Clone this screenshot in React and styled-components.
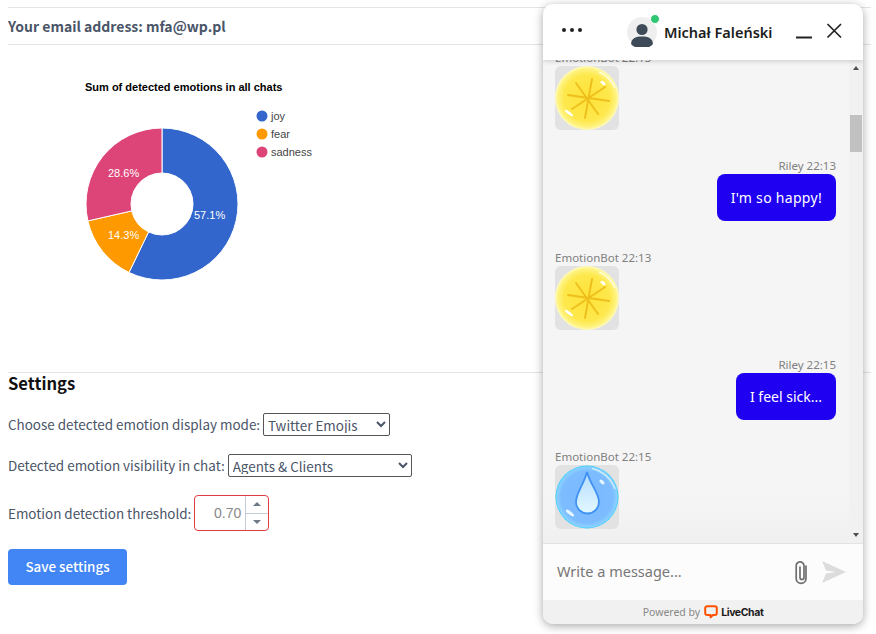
import React from "react";
import styled, { createGlobalStyle } from "styled-components";

const Global = createGlobalStyle`
  html, body { margin: 0; padding: 0; background: #fff; }
  body { font-family: "Noto Sans CJK SC", "Noto Sans", sans-serif; color: #4a5568; overflow: hidden; }
`;

const Page = styled.main`
  width: 863px;
  height: 627px;
  padding: 7px 0 0 8px;
`;
const EmailRow = styled.div`
  height: 36px;
  border-top: 1px solid #e2e4e8;
  border-bottom: 1px solid #e2e4e8;
  display: flex;
  align-items: center;
  font-size: 14px;
  font-weight: 700;
  color: #4a5568;
`;
const ChartBox = styled.div`
  height: 327px;
  svg { display: block; }
`;
const Settings = styled.section`
  border-top: 1px solid #e2e4e8;
`;
const Heading = styled.h2`
  margin: -1px 0 0;
  font-size: 16.6px;
  line-height: 22px;
  font-weight: 700;
  color: #111;
`;
const Field = styled.div`
  display: flex;
  align-items: center;
  gap: 3px;
  font-size: 13.45px;
  line-height: 23px;
  height: ${p => p.$h || 23}px;
  margin-top: ${p => p.$top}px;
  white-space: nowrap;
`;
const Select = styled.select`
  width: ${p => p.$w}px;
  height: 23px;
  box-sizing: border-box;
  border: 1px solid #555;
  border-radius: 2px;
  background: #fff;
  color: #4a5568;
  font-family: inherit;
  font-size: 13.45px;
  line-height: 18px;
  padding: 0 0 2px;
`;
const Stepper = styled.div`
  width: 75px;
  height: 36px;
  box-sizing: border-box;
  border: 1px solid #e03c41;
  border-radius: 4px;
  display: flex;
  overflow: hidden;
`;
const StepValue = styled.div`
  flex: 1;
  display: flex;
  align-items: center;
  justify-content: flex-end;
  padding-right: 4px;
  font-family: "Liberation Sans", sans-serif;
  font-size: 14px;
  color: #888;
`;
const StepButtons = styled.div`
  width: 22px;
  border-left: 1px solid #c5ccd6;
  display: flex;
  flex-direction: column;
`;
const StepButton = styled.div`
  flex: 1;
  display: flex;
  align-items: center;
  justify-content: center;
  & + & { border-top: 1px solid #c5ccd6; }
  &::after {
    content: "";
    border-left: 4px solid transparent;
    border-right: 4px solid transparent;
    ${p => p.$up ? "border-bottom: 4px solid #6f7a87;" : "border-top: 4px solid #6f7a87;"}
  }
`;
const SaveButton = styled.button`
  display: block;
  width: 119px;
  height: 36px;
  margin-top: 18px;
  border: 0;
  border-radius: 4px;
  background: #4285f4;
  color: #fff;
  font-family: inherit;
  font-size: 13.4px;
  font-weight: 500;
  line-height: 20px;
  padding: 0 0 2px;
`;

/* chat widget — floats over the page */
const Chat = styled.aside`
  position: absolute;
  left: 543px;
  top: 4px;
  width: 320px;
  height: 620px;
  border-radius: 10px;
  overflow: hidden;
  background: #fff;
  box-shadow: 0 2px 10px rgba(0,0,0,.35);
  display: flex;
  flex-direction: column;
  font-family: "Noto Sans", sans-serif;
`;
const ChatHeader = styled.header`
  flex: 0 0 56px;
  position: relative;
  z-index: 2;
  background: #fff;
  box-shadow: 0 1px 5px rgba(0,0,0,.18);
  display: flex;
  align-items: center;
  padding: 0 21px 0 19px;
  svg { display: block; }
`;
const Dots = styled.div`
  display: flex;
  gap: 4px;
  margin-top: -4px;
  i { width: 4px; height: 4px; border-radius: 50%; background: #222; display: block; }
`;
const AvatarWrap = styled.div`
  position: relative;
  margin-left: 45px;
  width: 30px;
  height: 30px;
`;
const OnlineDot = styled.span`
  position: absolute;
  right: -3px;
  top: -3px;
  width: 8px;
  height: 8px;
  border-radius: 50%;
  background: #2fc774;
  border: 1px solid #fff;
`;
const AgentName = styled.div`
  margin-left: 7px;
  width: 133px;
  font-size: 14.5px;
  font-weight: 600;
  color: #1b1d20;
  white-space: nowrap;
`;
const Controls = styled.div`
  display: flex;
  align-items: center;
  gap: 14px;
  margin-top: -3px;
`;
const ChatBody = styled.div`
  flex: 0 0 483px;
  display: flex;
  background: linear-gradient(#f5f5f5 90%, #f0f0f0);
  border-bottom: 1px solid #e3e3e3;
  overflow: hidden;
`;
const Messages = styled.div`
  flex: 1;
  padding: 0 13px 0 12px;
  margin-top: -10px;
  display: flex;
  flex-direction: column;
`;
const Meta = styled.div`
  font-size: 11.5px;
  line-height: 16px;
  color: #808080;
  text-align: ${p => p.$right ? "right" : "left"};
`;
const Group = styled.div`
  display: flex;
  flex-direction: column;
  align-items: ${p => p.$right ? "flex-end" : "flex-start"};
  margin-bottom: ${p => p.$mb}px;
`;
const EmojiTile = styled.div`
  width: 64px;
  height: 64px;
  border-radius: 6px;
  background: #e2e2e2;
  svg { display: block; }
`;
const Bubble = styled.div`
  height: 47px;
  box-sizing: border-box;
  padding: 0 14px;
  display: flex;
  align-items: center;
  border-radius: 8px;
  background: #2000f0;
  color: #fff;
  font-size: 14px;
  letter-spacing: ${p => p.$track || 0}px;
`;
const Scrollbar = styled.div`
  flex: 0 0 14px;
  background: #f1f1f1;
  position: relative;
`;
const Arrow = styled.span`
  position: absolute;
  left: 3.5px;
  ${p => p.$up ? "top: 6px;" : "bottom: 6px;"}
  border-left: 3.5px solid transparent;
  border-right: 3.5px solid transparent;
  ${p => p.$up ? "border-bottom: 4px solid #505050;" : "border-top: 4px solid #505050;"}
`;
const Thumb = styled.span`
  position: absolute;
  top: 55px;
  left: 1px;
  width: 12px;
  height: 37px;
  background: #c1c1c1;
`;
const Composer = styled.div`
  flex: 0 0 56px;
  background: #fcfcfc;
  display: flex;
  align-items: center;
  padding: 0 17px 0 14px;
  svg { display: block; }
`;
const Placeholder = styled.div`
  flex: 1;
  font-size: 14.5px;
  line-height: 20px;
  margin-top: -2px;
  color: #777;
`;
const Composed = styled.div`
  display: flex;
  align-items: center;
  gap: 12px;
`;
const Powered = styled.footer`
  flex: 1;
  background: #f1f1f1;
  display: flex;
  align-items: center;
  justify-content: center;
  gap: 4px;
  font-size: 10.5px;
  color: #888;
  svg { display: block; }
`;
const Brand = styled.b`
  font-family: "Inter", sans-serif;
  font-weight: 700;
  font-size: 10.5px;
  letter-spacing: -0.4px;
  color: #1b1b1b;
  margin-left: -1px;
`;

function Lemon({ id }) {
  return (
    <svg width="64" height="64" viewBox="0 0 64 64">
      <defs>
        <radialGradient id={id} cx="50%" cy="50%" r="50%">
          <stop offset="0" stopColor="#fde23a" />
          <stop offset=".72" stopColor="#fee84c" />
          <stop offset=".9" stopColor="#fff27c" />
          <stop offset="1" stopColor="#fffbbd" />
        </radialGradient>
      </defs>
      <circle cx="32" cy="32" r="32" fill={`url(#${id})`} />
      <g stroke="#eebf1c" strokeWidth="1.9" strokeLinecap="round">
        <line x1="37" y1="13" x2="30" y2="52" />
        <line x1="13" y1="29" x2="54" y2="35" />
        <line x1="17" y1="43" x2="50" y2="21" />
        <line x1="21" y1="17" x2="43" y2="48" />
      </g>
      <path d="M44 6 Q55 11 60 22" stroke="#fff" strokeWidth="1.4" fill="none" opacity=".75" />
      <ellipse cx="48" cy="17" rx="3" ry="1.5" fill="#fff" transform="rotate(40 48 17)" />
      <ellipse cx="14" cy="47" rx="5" ry="1.4" fill="#fff" transform="rotate(38 14 47)" />
    </svg>
  );
}
function Drop({ id }) {
  return (
    <svg width="64" height="64" viewBox="0 0 64 64">
      <defs>
        <radialGradient id={id} cx="50%" cy="50%" r="50%">
          <stop offset="0" stopColor="#7db8ff" />
          <stop offset=".82" stopColor="#7cbcff" />
          <stop offset=".95" stopColor="#8cd0ff" />
          <stop offset="1" stopColor="#2fd0ff" />
        </radialGradient>
        <linearGradient id={`${id}d`} x1="0" y1="0" x2="0" y2="1">
          <stop offset="0" stopColor="#b5ddff" />
          <stop offset="1" stopColor="#e2f8ff" />
        </linearGradient>
      </defs>
      <circle cx="32" cy="32" r="31.5" fill={`url(#${id})`} />
      <path d="M32 7 C29 19 21 28 21 37 A11.5 11.5 0 0 0 44 37 C44 28 35 19 32 7Z" fill={`url(#${id}d)`} stroke="#3f92f3" strokeWidth="1.8" />
      <path d="M37 3.5 Q54 8 60 24" stroke="#d8f1ff" strokeWidth="1.5" fill="none" opacity=".85" />
      <ellipse cx="47" cy="17" rx="3" ry="1.6" fill="#e8f7ff" transform="rotate(40 47 17)" />
      <ellipse cx="15" cy="48" rx="5" ry="1.6" fill="#e8f7ff" transform="rotate(38 15 48)" />
    </svg>
  );
}

const CX = 162, CY = 204, R = 76, H = 31;
function slice(a0, a1) {
  const p = (r, a) => [CX + r * Math.sin(a * 2 * Math.PI), CY - r * Math.cos(a * 2 * Math.PI)].map(v => v.toFixed(2)).join(" ");
  const large = a1 - a0 > 0.5 ? 1 : 0;
  return `M${p(H, a0)} L${p(R, a0)} A${R} ${R} 0 ${large} 1 ${p(R, a1)} L${p(H, a1)} A${H} ${H} 0 ${large} 0 ${p(H, a0)}Z`;
}
const SLICES = [
  { name: "joy", from: 0, to: 0.5714, color: "#3366cc", pct: "57.1%", x: 194, y: 219, ly: 116 },
  { name: "fear", from: 0.5714, to: 0.7143, color: "#ff9900", pct: "14.3%", x: 108, y: 239, ly: 134 },
  { name: "sadness", from: 0.7143, to: 1, color: "#dd4477", pct: "28.6%", x: 108, y: 177, ly: 152 },
];
const ChartText = styled.text`
  font-family: "Liberation Sans", Arial, sans-serif;
  font-size: 11px;
`;
function Chart() {
  return (
    <svg width="420" height="327" viewBox="8 45 420 327">
      <ChartText x="85" y="91" fontWeight="700" fill="#000">Sum of detected emotions in all chats</ChartText>
      {SLICES.map(s => (
        <g key={s.name}>
          <path d={slice(s.from, s.to)} fill={s.color} stroke="#fff" strokeWidth="1" />
          <ChartText x={s.x} y={s.y} fill="#fff">{s.pct}</ChartText>
          <circle cx="262" cy={s.ly} r="5.5" fill={s.color} />
          <ChartText x="271" y={s.ly + 4} fill="#444">{s.name}</ChartText>
        </g>
      ))}
    </svg>
  );
}

function Avatar() {
  return (
    <svg width="30" height="30" viewBox="0 0 30 30">
      <circle cx="15" cy="15" r="15" fill="#efefef" />
      <circle cx="15" cy="12.5" r="5.6" fill="#3f4a59" />
      <path d="M4 27 C4.5 21 9 19.5 15 19.5 C21 19.5 25.5 21 26 27 A15 15 0 0 1 4 27Z" fill="#3f4a59" />
    </svg>
  );
}

export default function App() {
  return (
    <>
      <Global />
      <Page>
        <EmailRow>Your email address: mfa@wp.pl</EmailRow>
        <ChartBox><Chart /></ChartBox>
        <Settings>
          <Heading>Settings</Heading>
          <Field $top={19}>
            Choose detected emotion display mode:
            <Select $w={127} defaultValue="t"><option value="t">Twitter Emojis</option></Select>
          </Field>
          <Field $top={18}>
            Detected emotion visibility in chat:
            <Select $w={184} defaultValue="a"><option value="a">Agents &amp; Clients</option></Select>
          </Field>
          <Field $top={18} $h={36}>
            Emotion detection threshold:
            <Stepper>
              <StepValue>0.70</StepValue>
              <StepButtons><StepButton $up /><StepButton /></StepButtons>
            </Stepper>
          </Field>
          <SaveButton>Save settings</SaveButton>
        </Settings>
      </Page>
      <Chat>
        <ChatHeader>
          <Dots><i /><i /><i /></Dots>
          <AvatarWrap><Avatar /><OnlineDot /></AvatarWrap>
          <AgentName>Michał Faleński</AgentName>
          <Controls>
            <svg width="16" height="16" viewBox="0 0 16 16"><path d="M0 14.5h16" stroke="#222" strokeWidth="2" /></svg>
            <svg width="16" height="16" viewBox="0 0 16 16"><path d="M1.5 1 L15 14.5 M15 1 L1.5 14.5" stroke="#222" strokeWidth="1.7" /></svg>
          </Controls>
        </ChatHeader>
        <ChatBody>
          <Messages>
            <Group $mb={28}>
              <Meta>EmotionBot 22:13</Meta>
              <EmojiTile><Lemon id="l1" /></EmojiTile>
            </Group>
            <Group $right $mb={29}>
              <Meta $right>Riley 22:13</Meta>
              <Bubble $track={0.3}>I'm so happy!</Bubble>
            </Group>
            <Group $mb={27}>
              <Meta>EmotionBot 22:13</Meta>
              <EmojiTile><Lemon id="l2" /></EmojiTile>
            </Group>
            <Group $right $mb={29}>
              <Meta $right>Riley 22:15</Meta>
              <Bubble>I feel sick...</Bubble>
            </Group>
            <Group $mb={0}>
              <Meta>EmotionBot 22:15</Meta>
              <EmojiTile><Drop id="d1" /></EmojiTile>
            </Group>
          </Messages>
          <Scrollbar><Arrow $up /><Thumb /><Arrow /></Scrollbar>
        </ChatBody>
        <Composer>
          <Placeholder>Write a message...</Placeholder>
          <Composed>
            <svg width="16" height="25" viewBox="0 0 16 25" fill="none">
              <path d="M12 6 V18.5 A4.6 4.6 0 0 1 2.2 18.5 V6 A3.7 3.7 0 0 1 10 5.5 V17.5 A2 2 0 0 1 6 17.5 V7" stroke="#6e6e6e" strokeWidth="1.7" strokeLinecap="round" />
            </svg>
            <svg width="24" height="22" viewBox="0 0 24 22"><path d="M0 0 L24 11 L0 22 L4 12.5 L14 11 L4 9.5Z" fill="#dcdcdc" /></svg>
          </Composed>
        </Composer>
        <Powered>
          Powered by
          <svg width="14" height="14" viewBox="0 0 14 14" fill="none">
            <path d="M3.2 1.2 H10.8 A2 2 0 0 1 12.8 3.2 V8 A2 2 0 0 1 10.8 10 H9 L6.6 12.4 V10 H3.2 A2 2 0 0 1 1.2 8 V3.2 A2 2 0 0 1 3.2 1.2Z" stroke="#ff5100" strokeWidth="2" strokeLinejoin="round" />
          </svg>
          <Brand>LiveChat</Brand>
        </Powered>
      </Chat>
    </>
  );
}
